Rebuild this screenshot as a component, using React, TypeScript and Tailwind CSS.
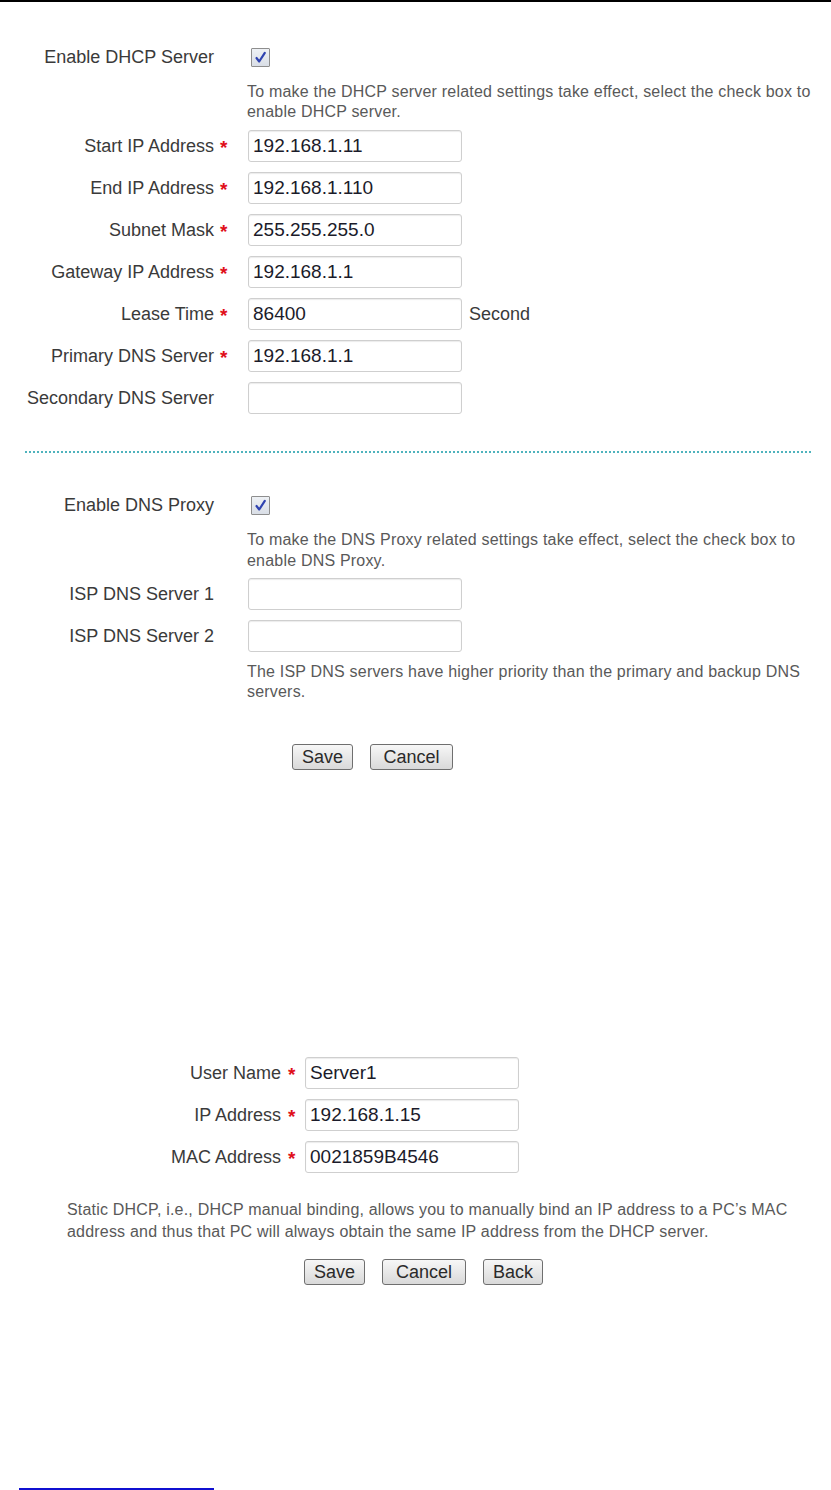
import React from "react";

const font = { fontFamily: '"Liberation Sans", Arial, sans-serif' };

function Star() {
  return <span className="text-[#e0101a] text-[19px] font-bold leading-none">*</span>;
}

function CheckBox() {
  return (
    <div className="w-[19px] h-[19px] border border-[#8e8e8e] bg-gradient-to-b from-[#eef1f5] to-[#d9dee6] flex items-center justify-center rounded-[1px]">
      <svg width="13" height="13" viewBox="0 0 13 13">
        <path d="M2.5 7 L5.2 10.5 L10.8 1.8" fill="none" stroke="#2f43b0" strokeWidth="2.2" strokeLinecap="round" strokeLinejoin="round" />
      </svg>
    </div>
  );
}

function Field({ value, w = "w-[214px]" }: { value?: string; w?: string }) {
  return (
    <div className={`${w} h-[32px] border border-[#cfcfcf] rounded-[3px] shadow-[inset_0_1px_1px_rgba(0,0,0,0.08)] bg-white flex items-center pl-[4px] text-[19px] text-[#1b1b2a]`}>
      {value}
    </div>
  );
}

function Row1({ label, star, value, extra }: { label: string; star?: boolean; value?: string; extra?: React.ReactNode }) {
  return (
    <div className="flex items-center h-[32px]">
      <div className="w-[214px] text-right text-[18px] text-[#3a3a3a] whitespace-nowrap">{label}</div>
      <div className="w-[34px] pl-[6px] flex items-center h-full pt-[2px]">{star ? <Star /> : null}</div>
      <Field value={value} />
      {extra}
    </div>
  );
}

function Row2({ label, value }: { label: string; value: string }) {
  return (
    <div className="flex items-center h-[32px]">
      <div className="w-[281px] text-right text-[18px] text-[#3a3a3a] whitespace-nowrap">{label}</div>
      <div className="w-[24px] pl-[7px] flex items-center h-full pt-[2px]"><Star /></div>
      <Field value={value} />
    </div>
  );
}

function Btn({ children, w }: { children: React.ReactNode; w: string }) {
  return (
    <div className={`${w} h-[26px] border border-[#6f6f6f] rounded-[3px] bg-gradient-to-b from-[#f7f7f7] to-[#d9d9d9] flex items-center justify-center text-[18px] text-[#2a2a2a]`}>
      {children}
    </div>
  );
}

export default function App() {
  return (
    <div className="w-[831px] h-[1490px] bg-white relative border-t-2 border-black flex flex-col" style={font}>
      {/* Section 1: DHCP */}
      <div className="flex items-center mt-[45px] h-[20px]">
        <div className="w-[214px] text-right text-[18px] text-[#3a3a3a]">Enable DHCP Server</div>
        <div className="w-[37px]" />
        <CheckBox />
      </div>
      <div className="ml-[247px] mt-[15px] text-[16px] tracking-[0.2px] leading-[20px] text-[#595959] w-[576px]">
        To make the DHCP server related settings take effect, select the check box to enable DHCP server.
      </div>
      <div className="flex flex-col gap-[10px] mt-[8px]">
        <Row1 label="Start IP Address" star value="192.168.1.11" />
        <Row1 label="End IP Address" star value="192.168.1.110" />
        <Row1 label="Subnet Mask" star value="255.255.255.0" />
        <Row1 label="Gateway IP Address" star value="192.168.1.1" />
        <Row1 label="Lease Time" star value="86400" extra={<span className="ml-[7px] text-[18px] text-[#3a3a3a]">Second</span>} />
        <Row1 label="Primary DNS Server" star value="192.168.1.1" />
        <Row1 label="Secondary DNS Server" />
      </div>

      <div className="ml-[25px] w-[786px] mt-[37px] border-t-2 border-dotted border-[#4fb3bd]" />

      {/* Section 2: DNS Proxy */}
      <div className="flex items-center mt-[42px] h-[20px]">
        <div className="w-[214px] text-right text-[18px] text-[#3a3a3a]">Enable DNS Proxy</div>
        <div className="w-[37px]" />
        <CheckBox />
      </div>
      <div className="ml-[247px] mt-[14px] text-[16px] tracking-[0.2px] leading-[21px] text-[#595959] w-[576px]">
        To make the DNS Proxy related settings take effect, select the check box to enable DNS Proxy.
      </div>
      <div className="flex flex-col gap-[10px] mt-[7px]">
        <Row1 label="ISP DNS Server 1" />
        <Row1 label="ISP DNS Server 2" />
      </div>
      <div className="ml-[247px] mt-[10px] text-[16px] tracking-[0.2px] leading-[20px] text-[#595959] w-[576px]">
        The ISP DNS servers have higher priority than the primary and backup DNS servers.
      </div>
      <div className="flex ml-[292px] mt-[42px] gap-[17px]">
        <Btn w="w-[61px]">Save</Btn>
        <Btn w="w-[83px]">Cancel</Btn>
      </div>

      {/* Section 3: Static DHCP */}
      <div className="flex flex-col gap-[10px] mt-[287px]">
        <Row2 label="User Name" value="Server1" />
        <Row2 label="IP Address" value="192.168.1.15" />
        <Row2 label="MAC Address" value="0021859B4546" />
      </div>
      <div className="ml-[67px] mt-[26px] text-[16px] tracking-[0.2px] leading-[22px] text-[#595959] w-[740px]">
        Static DHCP, i.e., DHCP manual binding, allows you to manually bind an IP address to a PC’s MAC address and thus that PC will always obtain the same IP address from the DHCP server.
      </div>
      <div className="flex ml-[304px] mt-[16px] gap-[17px]">
        <Btn w="w-[61px]">Save</Btn>
        <Btn w="w-[84px]">Cancel</Btn>
        <Btn w="w-[60px]">Back</Btn>
      </div>

      <div className="mt-auto ml-[19px] w-[195px] h-[2px] bg-[#1010d0]" />
    </div>
  );
}
